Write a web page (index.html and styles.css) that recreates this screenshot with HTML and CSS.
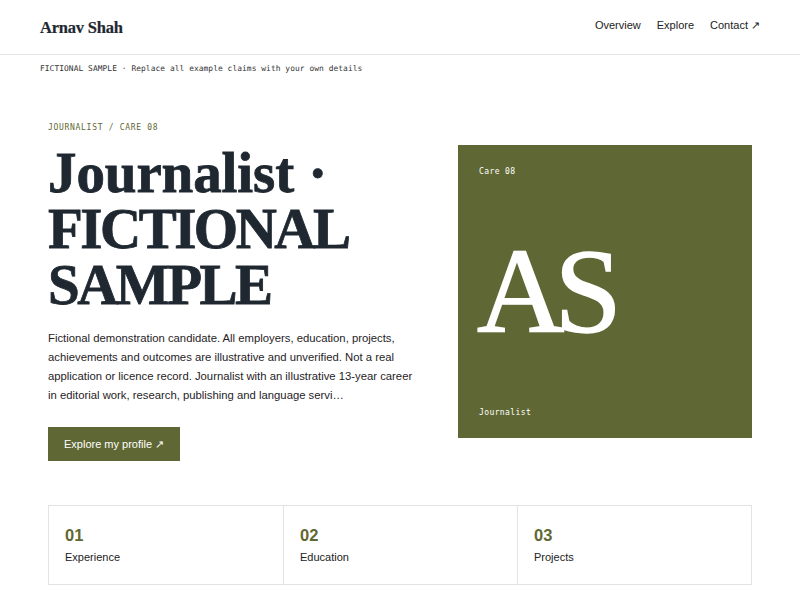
FILE: index.html
```html
<!DOCTYPE html>
<html lang="en">
<head>
<meta charset="utf-8">
<title>Arnav Shah</title>
<link rel="stylesheet" href="styles.css">
</head>
<body>
<header class="site-header">
  <a class="logo" href="#">Arnav Shah</a>
  <nav class="nav">
    <a href="#">Overview</a>
    <a href="#">Explore</a>
    <a href="#">Contact ↗</a>
  </nav>
</header>
<div class="notice">FICTIONAL SAMPLE · Replace all example claims with your own details</div>
<main class="main">
  <section class="hero">
    <div class="hero-text">
      <p class="eyebrow">JOURNALIST / CARE 08</p>
      <h1 class="title"><span class="title-lead">Journalist ·</span> FICTIONAL SAMPLE</h1>
      <p class="lede">Fictional demonstration candidate. All employers, education, projects, achievements and outcomes are illustrative and unverified. Not a real application or licence record. Journalist with an illustrative 13-year career in editorial work, research, publishing and language servi…</p>
      <a class="btn" href="#">Explore my profile ↗</a>
    </div>
    <div class="card">
      <span class="card-top">Care 08</span>
      <span class="monogram">AS</span>
      <span class="card-bottom">Journalist</span>
    </div>
  </section>
  <section class="stats">
    <div class="stat"><div class="num">01</div><div class="label">Experience</div></div>
    <div class="stat"><div class="num">02</div><div class="label">Education</div></div>
    <div class="stat"><div class="num">03</div><div class="label">Projects</div></div>
  </section>
</main>
</body>
</html>
```
FILE: styles.css
```css
* { box-sizing: border-box; }
html, body { margin: 0; padding: 0; background: #fff; }
body {
  font-family: "Liberation Sans", Arial, sans-serif;
  color: #1f2830;
}
a { color: inherit; text-decoration: none; }

.site-header {
  height: 55px;
  padding: 0 40px;
  display: flex;
  align-items: center;
  justify-content: space-between;
  border-bottom: 1px solid #e6e6e6;
}
.logo {
  font-family: "Liberation Serif", "Times New Roman", serif;
  font-weight: 700;
  font-size: 16.5px;
  letter-spacing: -0.2px;
  color: #1f2830;
  padding-top: 2px;
  -webkit-text-stroke: 0.2px #1f2830;
}
.nav {
  display: flex;
  gap: 16px;
  font-size: 11px;
  color: #222;
  padding-bottom: 4px;
}

.notice {
  padding: 9px 40px 0;
  font-family: "DejaVu Sans Mono", "Liberation Mono", monospace;
  font-size: 7.9px;
  letter-spacing: 0.06px;
  color: #333;
  height: 25px;
}

.main {
  padding: 0 48px;
}
.hero {
  display: grid;
  grid-template-columns: 1fr 294px;
  gap: 28px;
  align-items: center;
  padding-top: 41px;
}
.eyebrow {
  margin: 0 0 13px;
  padding-top: 2px;
  font-family: "DejaVu Sans Mono", "Liberation Mono", monospace;
  font-size: 8px;
  letter-spacing: 0.7px;
  color: #5f6834;
}
.title {
  margin: 0;
  font-family: "Liberation Serif", "Times New Roman", serif;
  font-weight: 700;
  font-size: 57px;
  line-height: 56px;
  letter-spacing: -2.5px;
  color: #1f2830;
  -webkit-text-stroke: 0.8px #1f2830;
}
.title-lead {
  letter-spacing: -0.1px;
}
.lede {
  margin: 16px 0 0;
  max-width: 368px;
  font-size: 11.3px;
  line-height: 19px;
  color: #1f2326;
}
.btn {
  display: inline-block;
  margin-top: 22px;
  background: #5f6834;
  color: #fff;
  font-size: 11px;
  height: 34px;
  line-height: 34px;
  padding: 0 16px;
}

.card {
  background: #5f6834;
  height: 293px;
  display: flex;
  flex-direction: column;
  justify-content: space-between;
  padding: 22px 21px 21px;
  color: #fff;
}
.card-top, .card-bottom {
  font-family: "DejaVu Sans Mono", "Liberation Mono", monospace;
  font-size: 8px;
  letter-spacing: 0.4px;
}
.monogram {
  font-family: "Liberation Serif", "Times New Roman", serif;
  font-size: 121px;
  line-height: 1;
  letter-spacing: -10px;
  margin-left: -2px;
  margin-top: -1px;
  -webkit-text-stroke: 1.5px #fff;
}

.stats {
  margin-top: 44px;
  display: grid;
  grid-template-columns: repeat(3, 1fr);
  border: 1px solid #e3e3e3;
}
.stat {
  padding: 19px 16px 16px;
  border-left: 1px solid #e3e3e3;
  height: 78px;
}
.stat:first-child { border-left: none; }
.num {
  font-size: 16.5px;
  font-weight: 700;
  color: #5f6834;
  line-height: 20px;
}
.label {
  margin-top: 6px;
  font-size: 11px;
  color: #222;
}
```
